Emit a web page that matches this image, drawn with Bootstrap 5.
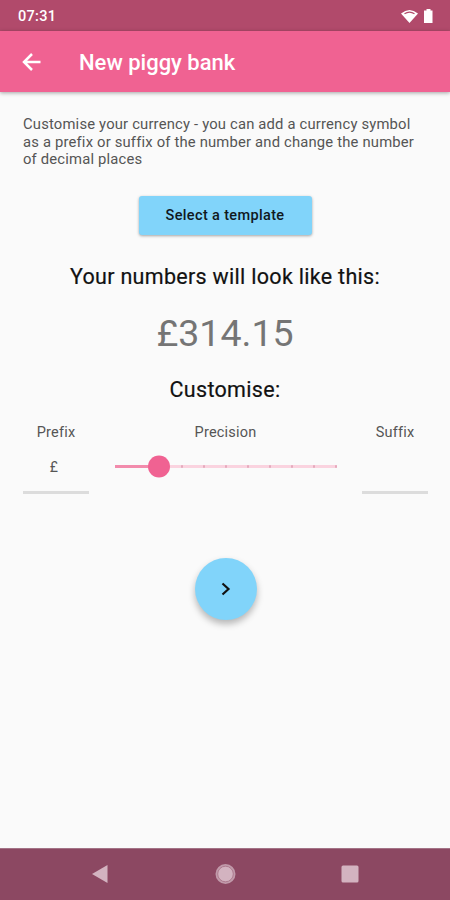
<!DOCTYPE html>
<html lang="en">
<head>
<meta charset="utf-8">
<meta name="viewport" content="width=device-width, initial-scale=1">
<title>New piggy bank</title>
<link href="https://cdn.jsdelivr.net/npm/bootstrap@5.3.0/dist/css/bootstrap.min.css" rel="stylesheet">
<style>
body { font-family: Roboto, "Liberation Sans", sans-serif; background: #fafafa; color: #111; height: 900px; overflow: hidden; }
svg { display: block; flex: none; }
.status { height: 31px; background: #b14a6b; color: #fff; padding: 2px 16px 0 18px; font: 500 14.5px/31px Roboto, sans-serif; letter-spacing: .3px; }
.appbar { height: 61px; background: #f06292; color: #fff; padding: 0 20px; box-shadow: 0 1px 4px rgba(0,0,0,.35); }
.appbar h1 { font-size: 22px; font-weight: 500; line-height: 30px; margin: 2px 0 0 37px; letter-spacing: 0; }
.intro { font-size: 14.8px; line-height: 17.6px; color: #555; margin: 24px 0 0 23px; letter-spacing: .18px; white-space: nowrap; }
.btn-template { width: 173px; height: 39px; margin-top: 27px; padding: 2px 0 0; border: 0; border-radius: 3px; background: #81d4fa; color: #10191e; font-size: 14.5px; font-weight: 500; letter-spacing: .35px; box-shadow: 0 1px 3px rgba(0,0,0,.35); }
.heading { font-size: 21.5px; line-height: 28px; font-weight: 400; margin: 0; color: #111; letter-spacing: .3px; -webkit-text-stroke: .2px #111; white-space: nowrap; }
.amount { font-size: 37.5px; line-height: 48px; color: #757575; margin-top: 18px; }
.customise { margin-top: 19px; }
.fields { margin: 19px 22px 0 23px; font-size: 14.5px; line-height: 20px; color: #555; letter-spacing: .2px; }
.side { width: 66px; }
.entry { height: 51px; line-height: 49px; font-size: 14px; padding-right: 4px; border-bottom: 3px solid #dcdcdc; }
.btn-next { width: 62px; height: 62px; margin: 64px 0 0 1px; padding: 0; border: 0; background: #81d4fa; box-shadow: 0 4px 7px rgba(0,0,0,.28); }
.sysnav { height: 52px; background: #8c4862; border-top: 1px solid #a37386; padding-bottom: 1px; }
</style>
</head>
<body class="d-flex flex-column">
<div class="status d-flex justify-content-between align-items-center">
  <span>07:31</span>
  <svg width="34" height="18" viewBox="0 0 34 18"><path d="M1 5.500Q9.500 -1.500 18 5.500L9.500 15Z" fill="#fff"/><path d="M4.500 5.800Q9.500 2.500 14.500 5.800" fill="none" stroke="#b14a6b" stroke-width="1.200"/><path d="M26.500 1h4v1.500h2v12.500h-8.500v-12.500h2.500z" fill="#fff"/></svg>
</div>
<header class="appbar d-flex align-items-center">
  <svg width="22" height="22" viewBox="0 0 22 22" fill="none" stroke="#fff" stroke-width="2.500"><path d="M20.500 11H4M12 3L4 11l8 8"/></svg>
  <h1>New piggy bank</h1>
</header>
<main class="flex-grow-1 d-flex flex-column align-items-center">
  <p class="intro align-self-start">Customise your currency - you can add a currency symbol<br>as a prefix or suffix of the number and change the number<br>of decimal places</p>
  <button class="btn btn-template" type="button">Select a template</button>
  <h2 class="heading mt-4 pt-1">Your numbers will look like this:</h2>
  <div class="amount">£314.15</div>
  <h2 class="heading customise">Customise:</h2>
  <div class="fields d-flex justify-content-between align-self-stretch text-center">
    <div class="side"><div>Prefix</div><div class="entry">£</div></div>
    <div><div>Precision</div>
      <svg width="226" height="50" viewBox="0 0 226 50"><path d="M2 23.500H224" stroke="#fad3df" stroke-width="3"/><path d="M2 23.500H46" stroke="#f28bac" stroke-width="3"/><path d="M68 23.500h2m20 0h2m20 0h2m20 0h2m20 0h2m20 0h2m20 0h2m20 0h2" stroke="#e5aabd" stroke-width="2.500"/><circle cx="46" cy="23.500" r="11" fill="#f06292"/></svg>
    </div>
    <div class="side"><div>Suffix</div><div class="entry"></div></div>
  </div>
  <button class="btn btn-next rounded-circle d-flex align-items-center justify-content-center" type="button" aria-label="Next"><svg width="12" height="16" viewBox="0 0 12 16" fill="none" stroke="#111" stroke-width="2.200"><path d="M2.500 2.500L8.500 8l-6 5.500"/></svg></button>
</main>
<nav class="sysnav d-flex justify-content-center align-items-center" aria-label="System">
  <svg width="270" height="24" viewBox="0 0 270 24" fill="#d3b3c0"><path d="M2 12L17.500 3v18z"/><circle cx="135.500" cy="12" r="10" fill="#c19aaa"/><circle cx="135.500" cy="12" r="7.800" stroke="#a67085" stroke-width=".8"/><rect x="251.500" y="3.500" width="17" height="17" rx="1.500"/></svg>
</nav>
<script src="https://cdn.jsdelivr.net/npm/bootstrap@5.3.0/dist/js/bootstrap.bundle.min.js"></script>
</body>
</html>
